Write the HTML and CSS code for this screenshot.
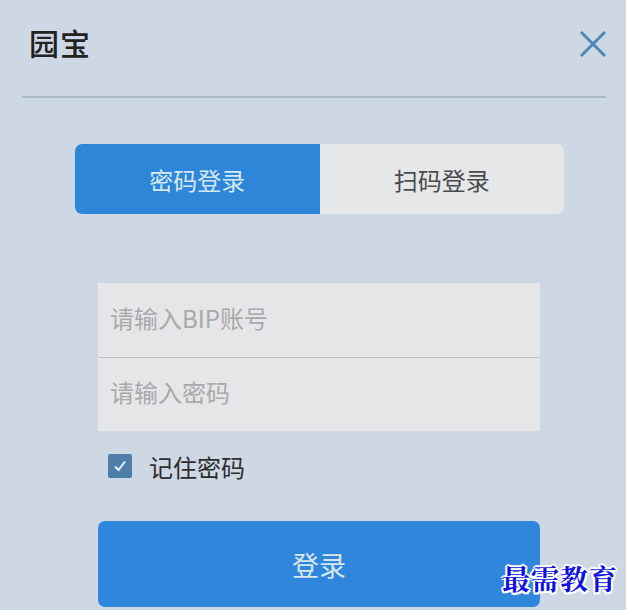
FILE: index.html
```html
<!DOCTYPE html>
<html lang="zh">
<head>
<meta charset="utf-8">
<link rel="stylesheet" href="styles.css">
</head>
<body>
<div class="panel">
  <header class="head">
    <h1 class="title">园宝</h1>
    <svg class="close" width="30" height="30" viewBox="0 0 30 30"><path d="M3 3 L27 27 M27 3 L3 27" stroke="#4f88b8" stroke-width="3" fill="none"/></svg>
  </header>
  <div class="tabs">
    <div class="tab active">密码登录</div>
    <div class="tab">扫码登录</div>
  </div>
  <div class="form">
    <div class="fields">
      <div class="field">请输入BIP账号</div>
      <div class="field">请输入密码</div>
    </div>
    <label class="remember">
      <span class="box"><svg width="16" height="16" viewBox="0 0 16 16"><path d="M3 8.5 L6.5 12 L13 3.5" stroke="#e8f0f8" stroke-width="2" fill="none"/></svg></span>
      <span class="rtext">记住密码</span>
    </label>
    <div class="login">登录</div>
  </div>
  <div class="mark">最需教育</div>
</div>
</body>
</html>
```
FILE: styles.css
```css
* { box-sizing: border-box; margin: 0; padding: 0; }
html, body { width: 626px; height: 610px; overflow: hidden; }
body { background: #cdd8e4; font-family: "Noto Sans CJK SC", "Noto Sans", sans-serif; }
.panel { position: relative; width: 626px; height: 610px; padding: 0 20px 0 22px; }
.head { display: flex; align-items: center; justify-content: space-between; height: 98px; border-bottom: 2px solid #a9b9c9; padding: 0 0 12px 7px; }
.title { font-size: 30px; font-weight: 500; color: #222; letter-spacing: 1px; }
.close { margin-right: -2px; margin-top: 4px; }
.tabs { display: flex; margin: 46px 42px 0 53px; height: 70px; border-radius: 7px; overflow: hidden; background: #e6e7e9; }
.tab { flex: 1; display: flex; align-items: center; justify-content: center; font-size: 24px; color: #4a4a4a; }
.tab.active { background: #2e86d8; color: #d6e8f0; }
.form { margin: 69px 0 0 76px; width: 442px; }
.fields { background: #e6e6e8; }
.field { height: 74px; display: flex; align-items: center; padding-left: 12px; padding-bottom: 6px; font-size: 24px; color: #a9a9ab; }
.field + .field { border-top: 1px solid #c0c0c2; }
.remember { display: flex; align-items: center; gap: 17px; margin: 19px 0 0 10px; height: 32px; }
.box { width: 24px; height: 24px; background: #4d7ea9; border-radius: 2px; display: flex; align-items: center; justify-content: center; }
.rtext { font-size: 24px; color: #2e2e2e; }
.login { margin-top: 39px; height: 86px; border-radius: 7px; background: #2f86da; color: #d6e8ee; font-size: 27px; display: flex; align-items: center; justify-content: center; }
.mark { position: absolute; right: 8px; top: 558px; font-family: "Noto Serif CJK SC", "AR PL UKai CN", "Noto Sans CJK SC", serif; font-size: 28px; font-weight: 700; color: #1010e0; text-shadow: 2px 0 0 #fff, -2px 0 0 #fff, 0 2px 0 #fff, 0 -2px 0 #fff, 1.5px 1.5px 0 #fff, -1.5px -1.5px 0 #fff, 1.5px -1.5px 0 #fff, -1.5px 1.5px 0 #fff; letter-spacing: 1px; }
```
